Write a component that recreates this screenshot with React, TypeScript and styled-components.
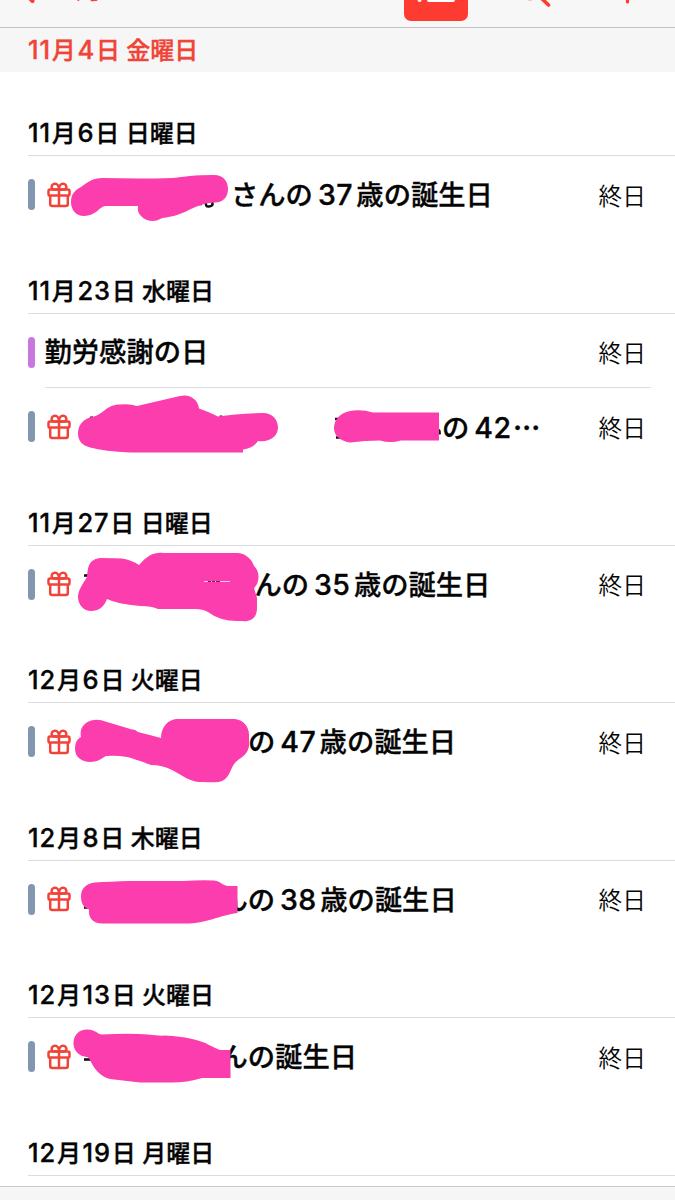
import React from 'react';
import styled, { createGlobalStyle } from 'styled-components';

const GlobalStyle = createGlobalStyle`
  * { box-sizing: border-box; }
  body {
    margin: 0;
    background: #fff;
    color: #050505;
    font-family: Inter, 'Noto Sans CJK JP', sans-serif;
  }
`;

const RED = '#fe3b30';
const PINK = '#fc3dad';

const Screen = styled.main`
  width: 675px;
  height: 1200px;
  overflow: hidden;
  display: flex;
  flex-direction: column;
  background: #fff;
`;

const NavBar = styled.header`
  height: 28px;
  flex: none;
  display: flex;
  align-items: flex-end;
  background: #f7f7f7;
  border-bottom: 1px solid #c4c4c6;
  overflow: hidden;
  color: ${RED};
`;

const BackButton = styled.div`
  display: flex;
  align-items: flex-end;
  width: 404px;
  height: 60px;
  padding: 0 0 23px 17px;
`;

const BackLabel = styled.span`
  margin: 0 0 1px 19px;
  font-size: 27px;
  line-height: 27px;
  white-space: nowrap;
`;

const ListButton = styled.div`
  width: 64px;
  height: 64px;
  margin-bottom: 6px;
  border-radius: 7px;
  background: ${RED};
`;

const NavIcon = styled.svg<{ $gap: number }>`
  flex: none;
  display: block;
  margin-left: ${(p) => p.$gap}px;
  margin-bottom: 16px;
`;

const StickyDate = styled.div`
  height: 44px;
  flex: none;
  padding-left: 28px;
  background: #f6f6f6;
  color: #f04438;
  font-size: 24px;
  font-weight: 500;
  line-height: 44px;
  white-space: pre;
  -webkit-text-stroke: 0.35px currentColor;
`;

const Agenda = styled.div`
  flex: none;
  height: 1114px;
  overflow: hidden;
`;

const DateHeader = styled.h2`
  height: 84px;
  margin: 0 0 0 28px;
  padding-top: 42px;
  border-bottom: 1px solid #dcdcde;
  font-size: 24px;
  font-weight: 500;
  line-height: 38px;
  white-space: pre;
  -webkit-text-stroke: 0.35px currentColor;
`;

const DateNumber = styled.span`
  margin-right: 1px;
  font-size: 25.5px;
  font-weight: 550;
  letter-spacing: 0.8px;

  & + & {
    margin-left: 1.6px;
  }
`;

const EventRow = styled.div`
  position: relative;
  display: flex;
  align-items: center;
  height: 73.5px;
  padding: 4px 29px 0 27.5px;
`;

const Separator = styled.div`
  height: 1px;
  margin: 0 24px 0 45px;
  background: #dcdcde;
`;

const CalendarBar = styled.span<{ $color: string }>`
  flex: none;
  width: 7px;
  height: 31px;
  border-radius: 3.5px;
  background: ${(p) => p.$color};
`;

const GiftSvg = styled.svg`
  flex: none;
  display: block;
  margin-left: 12.5px;
`;

const Title = styled.span<{ $start: number }>`
  margin-left: ${(p) => p.$start}px;
  padding-top: 2px;
  font-size: 27.3px;
  font-weight: 500;
  line-height: 40px;
  white-space: nowrap;
  -webkit-text-stroke: 0.35px currentColor;
`;

const Age = styled.span`
  margin: 0 3.5px 0 5px;
  font-size: 28.5px;
  font-weight: 550;
  letter-spacing: 0.4px;
`;

const Ellipsis = styled.span`
  margin-left: -2px;
  font-family: 'Noto Sans CJK JP', sans-serif;
  font-weight: 700;
`;

const AllDay = styled.span`
  margin-left: auto;
  padding-top: 4px;
  font-size: 23.7px;
  font-weight: 350;
  line-height: 40px;
`;

const Scribble = styled.svg`
  position: absolute;
  left: 0;
  top: 0;
  overflow: visible;
`;

const TabBar = styled.footer`
  height: 14px;
  flex: none;
  border-top: 1px solid #c9c9cb;
  background: #f6f6f6;
`;

const GiftIcon = () => (
  <GiftSvg width="24" height="26" viewBox="0 0 24 26" fill="none" stroke="#f0443a" strokeWidth="2.5" strokeLinejoin="round">
    <rect x="1.5" y="7.6" width="21" height="6" rx="1.6" />
    <path d="M3.2 13.6V22Q3.2 24 5.2 24H18.8Q20.8 24 20.8 22V13.6M12 7.600V24" />
    <path d="M12 7.600H8C5.200 7.600 4.300 5.800 4.700 4.200C5.200 2.100 7.300 1.300 9 1.900C11.100 2.700 12 5 12 7.600ZM12 7.600H16C18.800 7.600 19.700 5.800 19.300 4.200C18.800 2.100 16.700 1.300 15 1.900C12.900 2.700 12 5 12 7.600Z" />
  </GiftSvg>
);

interface CalendarEvent {
  color: string;
  gift?: boolean;
  /** Space between the icon (or bar) and the readable part of the title. */
  start: number;
  before: string;
  age?: string;
  after?: string;
  truncated?: boolean;
  /** Page offset of the row, origin for the marker strokes. */
  top?: number;
  marks?: string[];
  ink?: string;
  inkOver?: string;
}

interface Day {
  month: number;
  day: number;
  weekday: string;
  events: CalendarEvent[];
}

const BLUE = '#8296b0';

const days: Day[] = [
  {
    month: 11,
    day: 6,
    weekday: '日曜日',
    events: [
      {
        color: BLUE, gift: true, start: 160, before: 'さんの', age: '37', after: '歳の誕生日', top: 156,
        ink: 'M198 204H202M206 202Q205 207 209 206.500Q214 206 212 202',
        marks: ['M103 178Q110 178 150 178.500Q170 179 190 176Q200 175 214 175C224 175 228 182 228 189C228 196 224 202 216 202.500C200 202 190 211 177 215C168 218 163 217 160 219C156 222 146 222 141 216Q137 212 138 206L105 206C99 207 96 216 84 216C76 216 71 210 71 202C71 194 75 190 81 187C88 182 92 178 103 178Z'],
      },
    ],
  },
  {
    month: 11,
    day: 23,
    weekday: '水曜日',
    events: [
      { color: '#c977df', start: 10, before: '勤労感謝の日' },
      {
        color: BLUE, gift: true, start: 371, before: 'の', age: '42', truncated: true, top: 387.5,
        ink: 'M90 417.500L93 417M221 415V420M335 418.500H343M336 437H341M437 430Q440 428 439.500 434',
        marks: [
          'M78 433C78 424 84 418 92 416.500C104 414 106 404 120 404Q130 403 137 405.500L180 395.500C190 393 198 399 199 408Q208 411 218 416Q236 413 262 412.500C272 412 278 419 278 427C278 435 271 442 258 440.500Q253 448 243 449V452H130Q105 451 90 447C82 445 78 440 78 433Z',
          'M348 411Q360 408 373 412H439V440H401Q390 443 380 440Q365 440 350 442C342 441 334 436 334 428C334 419 340 413 348 411Z',
        ],
      },
    ],
  },
  {
    month: 11,
    day: 27,
    weekday: '日曜日',
    events: [
      {
        color: BLUE, gift: true, start: 183.5, before: 'んの', age: '35', after: '歳の誕生日', top: 546,
        ink: 'M84 575.500H90',
        marks: ['M101 558Q115 558 122 558.500Q132 560 139 565C148 555 154 552 164 553H238C247 554 252 560 254 566C260 571 260 583 254 588L257 598V608C257 618 251 622 241 621Q221 622 208 612Q203 609 195 609H158Q152 606 140 606Q117 604 107 599C104 607 99 611 91 611C84 611 78 605 78 597C78 590 83 584 87 577C88 568 88 559 101 558Z'],
        inkOver: 'M204 581.500H230',
      },
    ],
  },
  {
    month: 12,
    day: 6,
    weekday: '火曜日',
    events: [
      {
        color: BLUE, gift: true, start: 177, before: 'の', age: '47', after: '歳の誕生日', top: 703,
        marks: ['M94 720Q99 719 107 722L132 729.500Q135 729 138 732L161 738C161 727 168 719 178 719H235C244 720 249 727 249 735V746C248 753 243 757 238 760C229 767 232 776 222 781C218 783 210 782 200 782C190 782 182 775 172 770Q162 765 151 765Q135 759 127 757Q116 755 106 756C101 759 97 762 90 762C82 762 75 757 75 749C75 743 77 739 81 737C79 728 85 721 94 720Z'],
      },
    ],
  },
  {
    month: 12,
    day: 8,
    weekday: '木曜日',
    events: [
      {
        color: BLUE, gift: true, start: 149.5, before: 'んの', age: '38', after: '歳の誕生日', top: 860.5,
        ink: 'M84 907H88',
        marks: ['M95 882Q110 881 130 880.500H183Q200 879.500 214 880C222 881 221 885 229 885.500H237.500V912.500C218 915 208 923 185 923H102C93 923 88 917 89 909C83 907 81 902 81 896C81 888 86 883 95 882Z'],
      },
    ],
  },
  {
    month: 12,
    day: 13,
    weekday: '火曜日',
    events: [
      {
        color: BLUE, gift: true, start: 149.5, before: 'んの誕生日', top: 1018,
        ink: 'M84 1059.500H91',
        marks: ['M87 1029.500C93 1029 97 1033 101 1034.500Q130 1033 148 1034.500Q158 1036 165 1035.500Q195 1037 209 1045Q217 1049 220 1050H230.500V1078H202Q187 1082.500 172 1082.500H140L110 1079C101 1077 94 1069 90 1060C88 1056 86 1057 82 1056C76 1053 73 1048 73.500 1042C74 1035 79 1029.500 87 1029.500Z'],
      },
    ],
  },
  { month: 12, day: 19, weekday: '月曜日', events: [] },
];

const DateText = ({ month, day, weekday }: { month: number; day: number; weekday: string }) => (
  <>
    <DateNumber>{month}</DateNumber>月<DateNumber>{day}</DateNumber>日 {weekday}
  </>
);

const Event = ({ event }: { event: CalendarEvent }) => (
  <EventRow>
    <CalendarBar $color={event.color} />
    {event.gift && <GiftIcon />}
    <Title $start={event.start}>
      {event.before}
      {event.age && <Age>{event.age}</Age>}
      {event.after}
      {event.truncated && <Ellipsis>…</Ellipsis>}
    </Title>
    <AllDay>終日</AllDay>
    {event.marks && (
      <Scribble width="675" height="74" viewBox={`0 ${event.top} 675 74`}>
        {event.ink && <path d={event.ink} fill="none" stroke="#111" strokeWidth="2.6" />}
        {event.marks.map((d) => (
          <path key={d} d={d} fill={PINK} />
        ))}
        {event.inkOver && (
          <>
            <path d={event.inkOver} stroke="#ffc4e8" strokeWidth="1" />
            <path d={event.inkOver} stroke="#7a1c55" strokeWidth="1.2" strokeDasharray="0 4 3 1 3 1 4 20" />
          </>
        )}
      </Scribble>
    )}
  </EventRow>
);

export default function App() {
  return (
    <>
      <GlobalStyle />
      <Screen>
        <NavBar>
          <BackButton>
            <svg width="18" height="30" viewBox="0 0 18 30" fill="none" stroke={RED} strokeWidth="4" strokeLinecap="round">
              <path d="M16 2L3 14.500L15.500 27" />
            </svg>
            <BackLabel>11月</BackLabel>
          </BackButton>
          <ListButton>
            <svg width="64" height="64" viewBox="0 0 64 64" stroke="#fff" strokeWidth="4" strokeLinecap="round">
              <path d="M15.500 21H15.600M25 21H49M15.500 32H15.600M25 32H49M15.500 43H15.600M25 43H49" />
            </svg>
          </ListButton>
          <NavIcon $gap={50} width="36" height="36" viewBox="0 0 36 36" fill="none" stroke={RED} strokeWidth="3.6" strokeLinecap="round">
            <circle cx="12" cy="13" r="10.500" />
            <path d="M20 20L30.500 30" />
          </NavIcon>
          <NavIcon $gap={58} width="36" height="36" viewBox="0 0 36 36" fill="none" stroke={RED} strokeWidth="3.2" strokeLinecap="round">
            <path d="M15.500 2V27M3 14.500H28" />
          </NavIcon>
        </NavBar>
        <StickyDate>
          <DateText month={11} day={4} weekday="金曜日" />
        </StickyDate>
        <Agenda>
          {days.map((day) => (
            <section key={`${day.month}-${day.day}`}>
              <DateHeader>
                <DateText month={day.month} day={day.day} weekday={day.weekday} />
              </DateHeader>
              {day.events.map((event, i) => (
                <React.Fragment key={i}>
                  {i > 0 && <Separator />}
                  <Event event={event} />
                </React.Fragment>
              ))}
            </section>
          ))}
        </Agenda>
        <TabBar />
      </Screen>
    </>
  );
}
